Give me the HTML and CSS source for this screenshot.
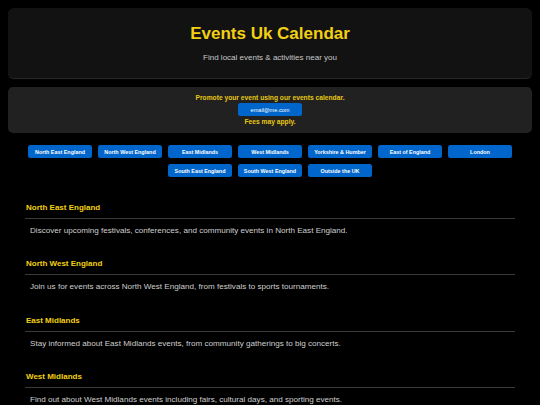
FILE: index.html
```html
<!DOCTYPE html>
<html lang="en">
<head>
<meta charset="utf-8">
<title>Events Uk Calendar</title>
<link rel="stylesheet" href="styles.css">
</head>
<body>
<header class="site-header">
  <h1 class="title">Events Uk Calendar</h1>
  <p class="tagline">Find local events &amp; activities near you</p>
</header>
<div class="promo">
  <p class="promo-text">Promote your event using our events calendar.</p>
  <a class="btn email-btn" href="#">email@me.com</a>
  <p class="promo-text fees">Fees may apply.</p>
</div>
<nav class="regions">
  <a class="btn" href="#ne">North East England</a>
  <a class="btn" href="#nw">North West England</a>
  <a class="btn" href="#em">East Midlands</a>
  <a class="btn" href="#wm">West Midlands</a>
  <a class="btn" href="#yh">Yorkshire &amp; Humber</a>
  <a class="btn" href="#ee">East of England</a>
  <a class="btn" href="#lo">London</a>
  <a class="btn" href="#se">South East England</a>
  <a class="btn" href="#sw">South West England</a>
  <a class="btn" href="#ou">Outside the UK</a>
</nav>
<main class="sections">
  <section class="region" id="ne">
    <h2 class="region-title">North East England</h2>
    <p class="region-text">Discover upcoming festivals, conferences, and community events in North East England.</p>
  </section>
  <section class="region" id="nw">
    <h2 class="region-title">North West England</h2>
    <p class="region-text">Join us for events across North West England, from festivals to sports tournaments.</p>
  </section>
  <section class="region" id="em">
    <h2 class="region-title">East Midlands</h2>
    <p class="region-text">Stay informed about East Midlands events, from community gatherings to big concerts.</p>
  </section>
  <section class="region" id="wm">
    <h2 class="region-title">West Midlands</h2>
    <p class="region-text">Find out about West Midlands events including fairs, cultural days, and sporting events.</p>
  </section>
</main>
</body>
</html>
```
FILE: styles.css
```css
html, body {
  background: #000;
}
body {
  margin: 8px;
  font-family: "Liberation Sans", Arial, sans-serif;
  color: #ccc;
}
.site-header {
  background: #121212;
  border-radius: 6px;
  padding: 16px 0 15px;
  text-align: center;
  box-shadow: 0 1px 1px #2a2a2a, 0 3px 6px rgba(0,0,0,0.9);
}
.title {
  margin: 0;
  font-size: 17px;
  line-height: 20px;
  font-weight: bold;
  color: #f3d012;
}
.tagline {
  margin: 9px 0 0;
  font-size: 8px;
  line-height: 10px;
  color: #c8c8c8;
}
.promo {
  margin-top: 9px;
  background: #212121;
  border-radius: 5px;
  padding: 7px 0;
  text-align: center;
  display: flex;
  flex-direction: column;
  align-items: center;
}
.promo-text {
  margin: 0;
  font-size: 6.7px;
  line-height: 8px;
  font-weight: bold;
  color: #e8c812;
}
.fees {
  margin-top: 2px;
}
.btn {
  display: flex;
  align-items: center;
  justify-content: center;
  width: 64px;
  height: 13px;
  background: #0066cc;
  color: #fff;
  border-radius: 2.5px;
  font-size: 5.4px;
  font-weight: bold;
  text-decoration: none;
  white-space: nowrap;
}
.email-btn {
  margin-top: 1px;
  font-weight: normal;
  font-size: 5.6px;
}
.regions {
  margin-top: 12px;
  display: flex;
  flex-wrap: wrap;
  justify-content: center;
  gap: 6px;
}
.sections {
  margin: 25.5px 17px 0;
}
.region {
  margin-bottom: 23.5px;
}
.region-title {
  margin: 0;
  font-size: 8px;
  line-height: 10px;
  font-weight: bold;
  color: #f3d012;
  padding-bottom: 5px;
  padding-left: 1px;
  border-bottom: 1px solid #3a3a3a;
}
.region-text {
  margin: 7px 0 0;
  padding-left: 5px;
  font-size: 8.1px;
  line-height: 10px;
  color: #cfcfcf;
}
```
